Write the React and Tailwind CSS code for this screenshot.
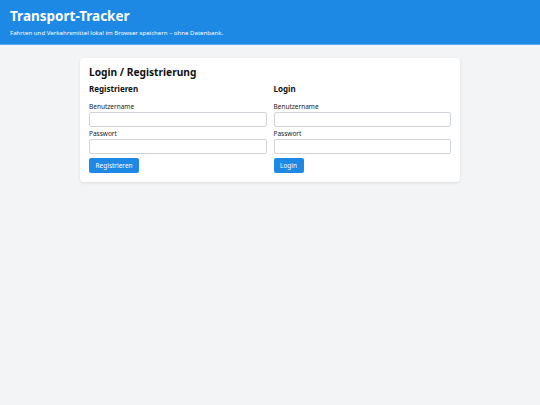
import React from 'react';

const Field = ({ label, type = 'text' }) => (
  <div className="flex flex-col">
    <label className="text-[6.5px] leading-[8px] text-[#222] mb-[1px]">{label}</label>
    <input type={type} className="h-[14.5px] w-full rounded-[2px] border border-[#d0d4d9] bg-white px-1 text-[7px] outline-none" />
  </div>
);

const AuthColumn = ({ title, button }) => (
  <div className="flex flex-col">
    <h3 className="text-[8px] leading-[10px] font-bold text-[#111] mb-[9px]">{title}</h3>
    <div className="flex flex-col gap-[3.7px]">
      <Field label="Benutzername" />
      <Field label="Passwort" type="password" />
    </div>
    <div className="mt-[4.5px] flex">
      <button className="h-[15px] rounded-[2px] bg-[#1e88e5] px-[6.5px] text-[6.5px] leading-[8px] text-white">{button}</button>
    </div>
  </div>
);

export default function App() {
  return (
    <div className="min-h-[405px] bg-[#f3f4f6]" style={{ fontFamily: '"Noto Sans", "Open Sans", sans-serif' }}>
      <header className="h-[45px] bg-[#1e88e5] border-b border-[#5aa9ee] px-[10px] pt-[8px]">
        <h1 className="text-[13.5px] leading-[16px] font-bold text-white">Transport-Tracker</h1>
        <p className="mt-[5px] text-[6.1px] leading-[8px] text-white">Fahrten und Verkehrsmittel lokal im Browser speichern – ohne Datenbank.</p>
      </header>
      <main className="pt-[13px] px-[10px]">
        <section className="mx-auto w-[380px] rounded-[4px] bg-white px-[9px] pt-[8px] pb-[8.7px] shadow-[0_1px_3px_rgba(0,0,0,0.1)]">
          <h2 className="text-[10.2px] leading-[13px] font-bold text-[#111] mb-[5px]">Login / Registrierung</h2>
          <div className="grid grid-cols-2 gap-[7px]">
            <AuthColumn title="Registrieren" button="Registrieren" />
            <AuthColumn title="Login" button="Login" />
          </div>
        </section>
      </main>
    </div>
  );
}
